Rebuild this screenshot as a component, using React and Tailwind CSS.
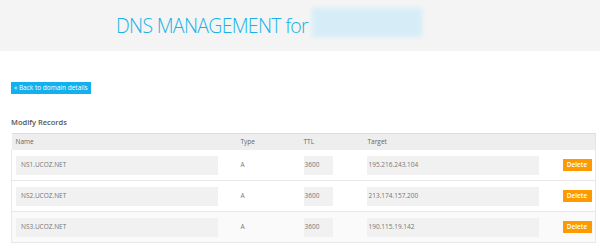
export default function App() {
  const records = [
    { name: 'NS1.UCOZ.NET', type: 'A', ttl: '3600', target: '195.216.243.104' },
    { name: 'NS2.UCOZ.NET', type: 'A', ttl: '3600', target: '213.174.157.200' },
    { name: 'NS3.UCOZ.NET', type: 'A', ttl: '3600', target: '190.115.19.142' },
  ];

  return (
    <div className="w-[600px] h-[250px] bg-white overflow-hidden font-['Open_Sans',sans-serif]">
      {/* Header */}
      <div className="h-[51px] bg-[#f4f4f4] flex items-center pl-[116px]">
        <h1 className="text-[19.5px] font-light text-[#18b2e6] leading-none tracking-[-0.7px] mt-[1px]">
          DNS MANAGEMENT for
        </h1>
        <div className="w-[110px] h-[29px] ml-[4px] mb-[6px] bg-[#d6edf7] blur-[2px]" />
      </div>

      <div className="px-[11px]">
        {/* Back button */}
        <button className="mt-[31px] h-[12px] px-[3px] bg-[#12b0ec] text-white text-[6.5px] leading-[12px]">
          « Back to domain details
        </button>

        {/* Title */}
        <h2 className="mt-[21px] text-[7.5px] font-semibold text-[#555]">Modify Records</h2>

        {/* Table */}
        <table className="mt-[5px] w-[584px] table-fixed border-collapse text-[6.5px] text-[#777]">
          <colgroup>
            <col className="w-[225px]" />
            <col className="w-[63px]" />
            <col className="w-[64px]" />
            <col className="w-[182px]" />
            <col className="w-[50px]" />
          </colgroup>
          <thead>
            <tr className="h-[16px] bg-[#eeeeee] border-t border-[#dddddd]">
              <th className="text-left font-normal pl-[4px] text-[#666]">Name</th>
              <th className="text-left font-normal pl-[4px] text-[#666]">Type</th>
              <th className="text-left font-normal pl-[4px] text-[#666]">TTL</th>
              <th className="text-left font-normal pl-[4px] text-[#666]">Target</th>
              <th className="border-r border-[#e4e4e4]" />
            </tr>
          </thead>
          <tbody>
            {records.map((r, i) => (
              <tr
                key={r.name}
                className={`h-[31px] border-b border-l border-r border-[#e8e8e8] ${i === 2 ? 'bg-[#fafafa]' : 'bg-white'}`}
              >
                <td className="pl-[4px]">
                  <div className="w-[202px] h-[19px] bg-[#f1f1f1] flex items-center pl-[5px]">{r.name}</div>
                </td>
                <td className="pl-[4px]">{r.type}</td>
                <td className="pl-[4px]">
                  <div className="w-[29px] h-[19px] bg-[#f1f1f1] flex items-center pl-[1px]">{r.ttl}</div>
                </td>
                <td className="pl-[3px]">
                  <div className="w-[172px] h-[19px] bg-[#f1f1f1] flex items-center pl-[2px]">{r.target}</div>
                </td>
                <td className="pl-[17px]">
                  <button className="w-[29px] h-[12px] bg-[#ff9900] text-white font-semibold text-[6.5px] leading-[12px]">
                    Delete
                  </button>
                </td>
              </tr>
            ))}
          </tbody>
        </table>
      </div>
    </div>
  );
}
